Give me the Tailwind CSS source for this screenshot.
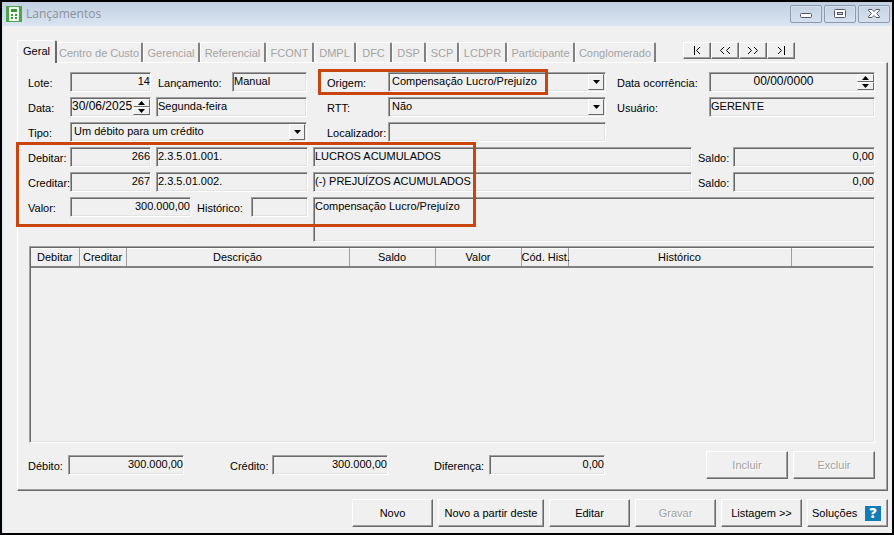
<!DOCTYPE html>
<html lang="pt-BR">
  <head>
    <meta charset="UTF-8" />
    <meta name="viewport" content="width=device-width, initial-scale=1.0" />
    <title>Lançamentos</title>
    <script src="https://cdn.jsdelivr.net/npm/@tailwindcss/browser@4"></script>
  </head>
  <body class="bg-black font-['Liberation_Sans',Arial,sans-serif] text-[11px] leading-[14px] text-black">
    <div class="min-h-screen flex flex-col p-[2px]">
      <!-- Barra de título -->
      <header class="h-6 flex items-center bg-linear-to-b from-[#c1cfdf] to-[#dae5f1] pl-1 pr-[2px]">
        <svg class="w-4 h-4 shrink-0" viewBox="0 0 16 16" aria-hidden="true">
          <rect width="16" height="16" fill="#4ba54b" />
          <rect x="3" y="1" width="10" height="14" rx="1" fill="#f4faf2" />
          <rect x="5" y="3" width="6" height="3" fill="#3f943f" />
          <path d="M5 8h2v2H5zM9 8h2v2H9zM5 11h2v2H5zM9 11h2v2H9z" fill="#3f943f" />
        </svg>
        <h1 class="flex-1 pl-1 font-['Open_Sans',sans-serif] text-[12px] text-[#8b939c]">Lançamentos</h1>
        <div class="flex gap-[2px]">
          <button aria-label="Minimizar" class="w-8 h-[18px] flex items-center justify-center rounded-[2px] border border-[#8a9bb0] shadow-[inset_0_0_0_1px_#d5e0ec]">
            <svg class="w-3 h-3" viewBox="0 0 12 12"><rect x="0.5" y="5.5" width="11" height="4" rx="1" fill="#fff" stroke="#535666" /></svg>
          </button>
          <button aria-label="Maximizar" class="w-8 h-[18px] flex items-center justify-center rounded-[2px] border border-[#8a9bb0] shadow-[inset_0_0_0_1px_#d5e0ec]">
            <svg class="w-3 h-3" viewBox="0 0 12 12"><rect x="0.5" y="1.5" width="11" height="8" rx="1" fill="#fff" stroke="#535666" /><rect x="3.500" y="4.500" width="5" height="2" fill="#c5d2e0" stroke="#535666" /></svg>
          </button>
          <button aria-label="Fechar" class="w-8 h-[18px] flex items-center justify-center rounded-[2px] border border-[#8a9bb0] shadow-[inset_0_0_0_1px_#d5e0ec]">
            <svg class="w-3 h-3" viewBox="0 0 12 12"><path d="M0.500 1.500h3.500l2 2 2-2h3.500v1L8.500 5.500l3 3v1H8l-2-2-2 2H0.500v-1l3-3-3-3z" fill="#fff" stroke="#535666" /></svg>
          </button>
        </div>
      </header>

      <main class="flex-1 flex flex-col bg-[#f0f0f0] border-l-2 border-[#e3ebf4] pl-[13px] pr-1 pt-[14px] pb-[6px]">
        <!-- Abas e navegação -->
        <div class="flex items-end h-[22px]">
          <nav class="flex items-end text-[#a4a4a4] [text-shadow:1px_1px_0_#fff]">
            <button class="relative z-10 -mb-px w-10 h-[23px] bg-[#f0f0f0] rounded-t-[2px] border-t border-l border-white border-r-2 border-r-[#696969] text-black pb-[3px]">Geral</button>
            <button disabled class="w-[86px] h-5 rounded-t-[2px] border-t border-white border-r-2 border-r-[#808080] whitespace-nowrap">Centro de Custo</button>
            <button disabled class="w-[57px] h-5 rounded-t-[2px] border-t border-l border-white border-r-2 border-r-[#808080]">Gerencial</button>
            <button disabled class="w-[66px] h-5 rounded-t-[2px] border-t border-l border-white border-r-2 border-r-[#808080]">Referencial</button>
            <button disabled class="w-12 h-5 rounded-t-[2px] border-t border-l border-white border-r-2 border-r-[#808080]">FCONT</button>
            <button disabled class="w-[42px] h-5 rounded-t-[2px] border-t border-l border-white border-r-2 border-r-[#808080]">DMPL</button>
            <button disabled class="w-9 h-5 rounded-t-[2px] border-t border-l border-white border-r-2 border-r-[#808080]">DFC</button>
            <button disabled class="w-[34px] h-5 rounded-t-[2px] border-t border-l border-white border-r-2 border-r-[#808080]">DSP</button>
            <button disabled class="w-[33px] h-5 rounded-t-[2px] border-t border-l border-white border-r-2 border-r-[#808080]">SCP</button>
            <button disabled class="w-12 h-5 rounded-t-[2px] border-t border-l border-white border-r-2 border-r-[#808080]">LCDPR</button>
            <button disabled class="w-[68px] h-5 rounded-t-[2px] border-t border-l border-white border-r-2 border-r-[#808080]">Participante</button>
            <button disabled class="w-[81px] h-5 rounded-t-[2px] border-t border-l border-white border-r-2 border-r-[#808080]">Conglomerado</button>
          </nav>
          <div class="flex self-start pt-[2px] pl-[27px]">
            <button aria-label="Primeiro" class="w-7 h-[17px] flex items-center justify-center border border-white border-r-[#696969] border-b-[#696969] shadow-[inset_-1px_-1px_0_#a0a0a0]">
              <svg class="w-[10px] h-[9px]" viewBox="0 0 10 9" fill="none" stroke="#000"><path d="M2.500 0v9M8 1L4.500 4.500 8 8" /></svg>
            </button>
            <button aria-label="Anterior" class="w-7 h-[17px] flex items-center justify-center border border-white border-r-[#696969] border-b-[#696969] shadow-[inset_-1px_-1px_0_#a0a0a0]">
              <svg class="w-3 h-[9px]" viewBox="0 0 12 9" fill="none" stroke="#000"><path d="M5 1L1.500 4.500 5 8M11 1L7.500 4.500 11 8" /></svg>
            </button>
            <button aria-label="Próximo" class="w-7 h-[17px] flex items-center justify-center border border-white border-r-[#696969] border-b-[#696969] shadow-[inset_-1px_-1px_0_#a0a0a0]">
              <svg class="w-3 h-[9px]" viewBox="0 0 12 9" fill="none" stroke="#000"><path d="M1 1l3.500 3.500L1 8M7 1l3.500 3.500L7 8" /></svg>
            </button>
            <button aria-label="Último" class="w-7 h-[17px] flex items-center justify-center border border-white border-r-[#696969] border-b-[#696969] shadow-[inset_-1px_-1px_0_#a0a0a0]">
              <svg class="w-[10px] h-[9px]" viewBox="0 0 10 9" fill="none" stroke="#000"><path d="M2 1l3.500 3.500L2 8M8.500 0v9" /></svg>
            </button>
          </div>
        </div>

        <form class="flex-1 flex flex-col border border-white border-r-[#696969] border-b-[#696969] shadow-[inset_-1px_-1px_0_#a0a0a0] pt-[9px] pb-[11px] pl-[10px] pr-3">
          <!-- Dados do lançamento -->
          <div class="flex">
            <div class="w-[279px] shrink-0 flex flex-col gap-[5px]">
              <div class="flex h-5">
                <label for="lote" class="w-[42px] pt-1">Lote:</label>
                <input id="lote" value="14" class="w-[81px] min-w-0 text-right pl-px pb-[3px] border border-[#a0a0a0] border-r-white border-b-white shadow-[inset_1px_1px_0_#696969,inset_-1px_-1px_0_#e3e3e3]" />
                <label for="lancamento" class="w-[81px] pl-[7px] pt-1">Lançamento:</label>
                <input id="lancamento" value="Manual" class="flex-1 min-w-0 px-px pb-[3px] border border-[#a0a0a0] border-r-white border-b-white shadow-[inset_1px_1px_0_#696969,inset_-1px_-1px_0_#e3e3e3]" />
              </div>
              <div class="flex h-5">
                <label for="data" class="w-[42px] pt-1">Data:</label>
                <div class="w-[81px] flex border border-[#a0a0a0] border-r-white border-b-white shadow-[inset_1px_1px_0_#696969,inset_-1px_-1px_0_#e3e3e3]">
                  <input id="data" value="30/06/2025" class="flex-1 min-w-0 pl-px pb-[3px] text-[12px]" />
                  <div class="w-[17px] flex flex-col py-px">
                    <button type="button" aria-label="Aumentar data" class="flex-1 flex items-center justify-center border border-white border-r-[#696969] border-b-[#696969] bg-[#f0f0f0]"><svg class="w-[7px] h-1" viewBox="0 0 7 4"><path d="M0 4L3.500 0 7 4z" /></svg></button>
                    <button type="button" aria-label="Diminuir data" class="flex-1 flex items-center justify-center border border-white border-r-[#696969] border-b-[#696969] bg-[#f0f0f0]"><svg class="w-[7px] h-1" viewBox="0 0 7 4"><path d="M0 0L3.500 4 7 0z" /></svg></button>
                  </div>
                </div>
                <input aria-label="Dia da semana" value="Segunda-feira" class="flex-1 min-w-0 ml-[5px] px-px pb-[3px] border border-[#a0a0a0] border-r-white border-b-white shadow-[inset_1px_1px_0_#696969,inset_-1px_-1px_0_#e3e3e3]" />
              </div>
              <div class="flex h-5">
                <label for="tipo" class="w-[42px] pt-1">Tipo:</label>
                <div class="flex-1 flex border border-[#a0a0a0] border-r-white border-b-white shadow-[inset_1px_1px_0_#696969,inset_-1px_-1px_0_#e3e3e3] p-px">
                  <select id="tipo" class="flex-1 min-w-0 appearance-none pl-[2px] pb-[3px]"><option>Um débito para um crédito</option></select>
                  <span class="w-4 flex items-center justify-center border border-white border-r-[#696969] border-b-[#696969]" aria-hidden="true"><svg class="w-[7px] h-1" viewBox="0 0 7 4"><path d="M0 0L3.500 4 7 0z" /></svg></span>
                </div>
              </div>
            </div>

            <div class="relative w-[279px] shrink-0 ml-5 flex flex-col gap-[5px]">
              <div class="flex h-5">
                <label for="origem" class="w-[61px] pt-1">Origem:</label>
                <div class="flex-1 flex border border-[#a0a0a0] border-r-white border-b-white shadow-[inset_1px_1px_0_#696969,inset_-1px_-1px_0_#e3e3e3] p-px">
                  <select id="origem" class="flex-1 min-w-0 appearance-none pl-[2px] pb-[3px]"><option>Compensação Lucro/Prejuízo</option></select>
                  <span class="w-4 flex items-center justify-center border border-white border-r-[#696969] border-b-[#696969]" aria-hidden="true"><svg class="w-[7px] h-1" viewBox="0 0 7 4"><path d="M0 0L3.500 4 7 0z" /></svg></span>
                </div>
              </div>
              <div class="flex h-5">
                <label for="rtt" class="w-[61px] pt-1">RTT:</label>
                <div class="flex-1 flex border border-[#a0a0a0] border-r-white border-b-white shadow-[inset_1px_1px_0_#696969,inset_-1px_-1px_0_#e3e3e3] p-px">
                  <select id="rtt" class="flex-1 min-w-0 appearance-none pl-[2px] pb-[3px]"><option>Não</option></select>
                  <span class="w-4 flex items-center justify-center border border-white border-r-[#696969] border-b-[#696969]" aria-hidden="true"><svg class="w-[7px] h-1" viewBox="0 0 7 4"><path d="M0 0L3.500 4 7 0z" /></svg></span>
                </div>
              </div>
              <div class="flex h-5">
                <label for="localizador" class="w-[61px] pt-1">Localizador:</label>
                <input id="localizador" class="flex-1 min-w-0 px-px pb-[3px] border border-[#a0a0a0] border-r-white border-b-white shadow-[inset_1px_1px_0_#696969,inset_-1px_-1px_0_#e3e3e3]" />
              </div>
              <div class="absolute -top-[3px] -left-[9px] w-[230px] h-[26px] border-3 border-[#c8450f] pointer-events-none"></div>
            </div>

            <div class="flex-1 min-w-0 ml-[11px] flex flex-col gap-[5px]">
              <div class="flex h-5">
                <label for="ocorrencia" class="w-[92px] shrink-0 pt-1">Data ocorrência:</label>
                <div class="flex-1 min-w-0 flex border border-[#a0a0a0] border-r-white border-b-white shadow-[inset_1px_1px_0_#696969,inset_-1px_-1px_0_#e3e3e3]">
                  <input id="ocorrencia" value="00/00/0000" class="flex-1 min-w-0 text-center pb-[3px] text-[12px]" />
                  <div class="w-[17px] flex flex-col py-px">
                    <button type="button" aria-label="Aumentar data de ocorrência" class="flex-1 flex items-center justify-center border border-white border-r-[#696969] border-b-[#696969] bg-[#f0f0f0]"><svg class="w-[7px] h-1" viewBox="0 0 7 4"><path d="M0 4L3.500 0 7 4z" /></svg></button>
                    <button type="button" aria-label="Diminuir data de ocorrência" class="flex-1 flex items-center justify-center border border-white border-r-[#696969] border-b-[#696969] bg-[#f0f0f0]"><svg class="w-[7px] h-1" viewBox="0 0 7 4"><path d="M0 0L3.500 4 7 0z" /></svg></button>
                  </div>
                </div>
              </div>
              <div class="flex h-5">
                <label for="usuario" class="w-[92px] shrink-0 pt-1">Usuário:</label>
                <input id="usuario" value="GERENTE" class="flex-1 min-w-0 px-px pb-[3px] border border-[#a0a0a0] border-r-white border-b-white shadow-[inset_1px_1px_0_#696969,inset_-1px_-1px_0_#e3e3e3]" />
              </div>
            </div>
          </div>

          <!-- Contas e valor -->
          <div class="relative mt-[5px] flex flex-col gap-[5px]">
            <div class="flex h-5">
              <label for="debitar" class="w-[42px] pt-1">Debitar:</label>
              <input id="debitar" value="266" class="w-[81px] text-right pl-px pb-[3px] border border-[#a0a0a0] border-r-white border-b-white shadow-[inset_1px_1px_0_#696969,inset_-1px_-1px_0_#e3e3e3]" />
              <input aria-label="Classificação a debitar" value="2.3.5.01.001." class="w-[152px] ml-[5px] px-px pb-[3px] border border-[#a0a0a0] border-r-white border-b-white shadow-[inset_1px_1px_0_#696969,inset_-1px_-1px_0_#e3e3e3]" />
              <input aria-label="Conta a debitar" value="LUCROS ACUMULADOS" class="flex-1 min-w-0 ml-[5px] px-px pb-[3px] border border-[#a0a0a0] border-r-white border-b-white shadow-[inset_1px_1px_0_#696969,inset_-1px_-1px_0_#e3e3e3]" />
              <label for="saldo-debitar" class="w-[41px] pl-[6px] pt-1">Saldo:</label>
              <input id="saldo-debitar" value="0,00" class="w-[142px] text-right pl-px pb-[3px] border border-[#a0a0a0] border-r-white border-b-white shadow-[inset_1px_1px_0_#696969,inset_-1px_-1px_0_#e3e3e3]" />
            </div>
            <div class="flex h-5">
              <label for="creditar" class="w-[42px] pt-1">Creditar:</label>
              <input id="creditar" value="267" class="w-[81px] text-right pl-px pb-[3px] border border-[#a0a0a0] border-r-white border-b-white shadow-[inset_1px_1px_0_#696969,inset_-1px_-1px_0_#e3e3e3]" />
              <input aria-label="Classificação a creditar" value="2.3.5.01.002." class="w-[152px] ml-[5px] px-px pb-[3px] border border-[#a0a0a0] border-r-white border-b-white shadow-[inset_1px_1px_0_#696969,inset_-1px_-1px_0_#e3e3e3]" />
              <input aria-label="Conta a creditar" value="(-) PREJUÍZOS ACUMULADOS" class="flex-1 min-w-0 ml-[5px] px-px pb-[3px] border border-[#a0a0a0] border-r-white border-b-white shadow-[inset_1px_1px_0_#696969,inset_-1px_-1px_0_#e3e3e3]" />
              <label for="saldo-creditar" class="w-[41px] pl-[6px] pt-1">Saldo:</label>
              <input id="saldo-creditar" value="0,00" class="w-[142px] text-right pl-px pb-[3px] border border-[#a0a0a0] border-r-white border-b-white shadow-[inset_1px_1px_0_#696969,inset_-1px_-1px_0_#e3e3e3]" />
            </div>
            <div class="flex items-start">
              <label for="valor" class="w-[42px] pt-1">Valor:</label>
              <input id="valor" value="300.000,00" class="w-[121px] h-5 text-right pl-px pb-[3px] border border-[#a0a0a0] border-r-white border-b-white shadow-[inset_1px_1px_0_#696969,inset_-1px_-1px_0_#e3e3e3]" />
              <label for="historico" class="w-[60px] pl-[6px] pt-1">Histórico:</label>
              <input id="historico" class="w-[57px] h-5 px-px pb-[3px] border border-[#a0a0a0] border-r-white border-b-white shadow-[inset_1px_1px_0_#696969,inset_-1px_-1px_0_#e3e3e3]" />
              <textarea aria-label="Descrição do histórico" class="flex-1 min-w-0 h-[45px] ml-[5px] px-px pt-px resize-none border border-[#a0a0a0] border-r-white border-b-white shadow-[inset_1px_1px_0_#696969,inset_-1px_-1px_0_#e3e3e3]">Compensação Lucro/Prejuízo</textarea>
            </div>
            <div class="absolute -top-[5px] -left-3 w-[460px] h-[85px] border-3 border-[#c8450f] pointer-events-none"></div>
          </div>

          <!-- Partidas -->
          <div class="mt-1 ml-px flex-1 border border-[#a0a0a0] border-r-white border-b-white shadow-[inset_1px_1px_0_#696969,inset_-1px_-1px_0_#e3e3e3] p-px">
            <table class="w-full table-fixed border-collapse">
              <thead>
                <tr class="h-[18px] border-t border-t-white border-b-2 border-b-[#808080]">
                  <th class="w-12 p-0 font-normal border-r border-[#a0a0a0]">Debitar</th>
                  <th class="w-[47px] p-0 font-normal border-r border-[#a0a0a0]">Creditar</th>
                  <th class="w-[223px] p-0 font-normal border-r border-[#a0a0a0]">Descrição</th>
                  <th class="w-[86px] p-0 font-normal border-r border-[#a0a0a0]">Saldo</th>
                  <th class="w-[86px] p-0 font-normal border-r border-[#a0a0a0]">Valor</th>
                  <th class="w-[47px] p-0 font-normal border-r border-[#a0a0a0] whitespace-nowrap">Cód. Hist.</th>
                  <th class="w-[223px] p-0 font-normal border-r border-[#a0a0a0]">Histórico</th>
                  <td></td>
                </tr>
              </thead>
              <tbody></tbody>
            </table>
          </div>

          <!-- Totais -->
          <div class="mt-2 flex items-center">
            <label for="debito" class="w-10 pt-[2px]">Débito:</label>
            <input id="debito" value="300.000,00" class="w-[116px] h-5 text-right pl-px pb-[3px] border border-[#a0a0a0] border-r-white border-b-white shadow-[inset_1px_1px_0_#696969,inset_-1px_-1px_0_#e3e3e3]" />
            <label for="credito" class="w-[42px] ml-[46px] pt-[2px]">Crédito:</label>
            <input id="credito" value="300.000,00" class="w-[116px] h-5 text-right pl-px pb-[3px] border border-[#a0a0a0] border-r-white border-b-white shadow-[inset_1px_1px_0_#696969,inset_-1px_-1px_0_#e3e3e3]" />
            <label for="diferenca" class="w-[55px] ml-[46px] pt-[2px]">Diferença:</label>
            <input id="diferenca" value="0,00" class="w-[116px] h-5 text-right pl-px pb-[3px] border border-[#a0a0a0] border-r-white border-b-white shadow-[inset_1px_1px_0_#696969,inset_-1px_-1px_0_#e3e3e3]" />
            <div class="ml-auto flex gap-[5px]">
              <button type="button" disabled class="w-[82px] h-7 border border-white border-r-[#696969] border-b-[#696969] shadow-[inset_-1px_-1px_0_#a0a0a0] text-[#a0a0a0] [text-shadow:1px_1px_0_#fff]">Incluir</button>
              <button type="button" disabled class="w-[82px] h-7 border border-white border-r-[#696969] border-b-[#696969] shadow-[inset_-1px_-1px_0_#a0a0a0] text-[#a0a0a0] [text-shadow:1px_1px_0_#fff]">Excluir</button>
            </div>
          </div>
        </form>

        <!-- Ações -->
        <footer class="mt-2 flex justify-end gap-[5px]">
          <button class="w-[81px] h-7 border border-white border-r-[#696969] border-b-[#696969] shadow-[inset_-1px_-1px_0_#a0a0a0]">Novo</button>
          <button class="w-[106px] h-7 border border-white border-r-[#696969] border-b-[#696969] shadow-[inset_-1px_-1px_0_#a0a0a0]">Novo a partir deste</button>
          <button class="w-[81px] h-7 border border-white border-r-[#696969] border-b-[#696969] shadow-[inset_-1px_-1px_0_#a0a0a0]">Editar</button>
          <button disabled class="w-[81px] h-7 border border-white border-r-[#696969] border-b-[#696969] shadow-[inset_-1px_-1px_0_#a0a0a0] text-[#a0a0a0] [text-shadow:1px_1px_0_#fff]">Gravar</button>
          <button class="w-[81px] h-7 border border-white border-r-[#696969] border-b-[#696969] shadow-[inset_-1px_-1px_0_#a0a0a0]">Listagem &gt;&gt;</button>
          <button class="w-[81px] h-7 flex items-center justify-between pl-1 pr-[6px] border border-white border-r-[#696969] border-b-[#696969] shadow-[inset_-1px_-1px_0_#a0a0a0]">
            Soluções
            <span class="w-4 h-[15px] flex items-center justify-center bg-[#127cb5] font-['Open_Sans',sans-serif] font-extrabold text-[14px] text-white">?</span>
          </button>
        </footer>
      </main>
    </div>
  </body>
</html>
